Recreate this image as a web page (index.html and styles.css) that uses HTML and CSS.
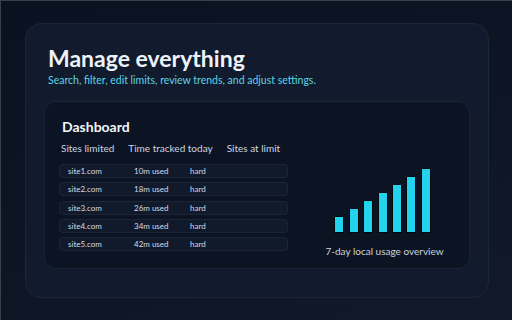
FILE: index.html
```html
<!DOCTYPE html>
<html lang="en">

<head>
    <meta charset="UTF-8">
    <meta name="viewport" content="width=device-width, initial-scale=1.0">
    <title>Manage everything</title>
    <link rel="stylesheet" href="styles.css">
</head>

<body>
    <div class="card">
        <!-- header -->
        <div class="header">
            <h1 class="title">Manage everything</h1>
            <p class="subtitle">Search, filter, edit limits, review trends, and adjust settings.</p>
        </div>

        <!-- dashboard panel -->
        <div class="panel">
            <div class="left">
                <h2 class="panel-title">Dashboard</h2>
                <div class="stats">
                    <span>Sites limited</span>
                    <span>Time tracked today</span>
                    <span>Sites at limit</span>
                </div>
                <div class="rows">
                    <div class="row"><span>site1.com</span><span>10m used</span><span>hard</span></div>
                    <div class="row"><span>site2.com</span><span>18m used</span><span>hard</span></div>
                    <div class="row"><span>site3.com</span><span>26m used</span><span>hard</span></div>
                    <div class="row"><span>site4.com</span><span>34m used</span><span>hard</span></div>
                    <div class="row"><span>site5.com</span><span>42m used</span><span>hard</span></div>
                </div>
            </div>
            <div class="right">
                <div class="chart">
                    <div class="bar" style="height: 17px"></div>
                    <div class="bar" style="height: 25px"></div>
                    <div class="bar" style="height: 33px"></div>
                    <div class="bar" style="height: 41px"></div>
                    <div class="bar" style="height: 49px"></div>
                    <div class="bar" style="height: 57px"></div>
                    <div class="bar" style="height: 65px"></div>
                </div>
                <p class="caption">7-day local usage overview</p>
            </div>
        </div>
    </div>
</body>

</html>
```

FILE: styles.css
```css
/* page */
html,
body {
    margin: 0;
    height: 320px;
}

body {
    box-sizing: border-box;
    padding: 22px 23px 0 24px;
    font-family: Lato, "Noto Sans", sans-serif;
    background: linear-gradient(160deg, #0a1120 0%, #0e1626 60%, #121a29 100%);
    border-top: 1px solid #3a3f49;
    border-left: 1px solid #3a3f49;
    overflow: hidden;
}

/* outer card */
.card {
    box-sizing: border-box;
    height: 275px;
    padding: 0 18px;
    background-color: #111b2d;
    border: 1px solid #1b2639;
    border-radius: 16px;
}

.header {
    padding: 20px 0 0 4px;
    height: 57px;
}

.title {
    margin: 0;
    font-size: 23px;
    line-height: 29px;
    font-weight: 700;
    color: #eef2f8;
}

.subtitle {
    margin: 0;
    font-size: 10.5px;
    line-height: 14px;
    color: #5fd3e6;
}

/* inner panel */
.panel {
    box-sizing: border-box;
    height: 168px;
    display: grid;
    grid-template-columns: 229px 1fr;
    column-gap: 26px;
    padding: 15px 14px 0 14px;
    background-color: #0c1424;
    border: 1px solid #182336;
    border-radius: 12px;
}

.panel-title {
    margin: 0 0 0 3px;
    font-size: 14px;
    line-height: 20px;
    font-weight: 700;
    color: #f1f5f9;
}

.stats {
    display: flex;
    gap: 14px;
    margin: 3px 0 8px 2px;
    font-size: 10px;
    line-height: 16px;
    white-space: nowrap;
    color: #cdd5e0;
}

.rows {
    display: flex;
    flex-direction: column;
    gap: 4.3px;
}

.row {
    box-sizing: border-box;
    height: 14px;
    display: grid;
    grid-template-columns: 66px 56px 1fr;
    align-items: center;
    padding: 0 8px;
    font-size: 8px;
    color: #d5dbe4;
    background-color: #111a2b;
    border: 1px solid #1b2538;
    border-radius: 4px;
}

/* chart */
.right {
    display: flex;
    flex-direction: column;
    align-items: center;
}

.chart {
    display: flex;
    align-items: flex-end;
    gap: 4.4px;
    height: 116px;
    margin-right: 4px;
}

.bar {
    box-sizing: border-box;
    width: 10px;
    background-color: #22d3ee;
    border: 1px solid #04080f;
}

.caption {
    margin: 11px 0 0 0;
    font-size: 10px;
    line-height: 14px;
    color: #cbd3de;
}
```
